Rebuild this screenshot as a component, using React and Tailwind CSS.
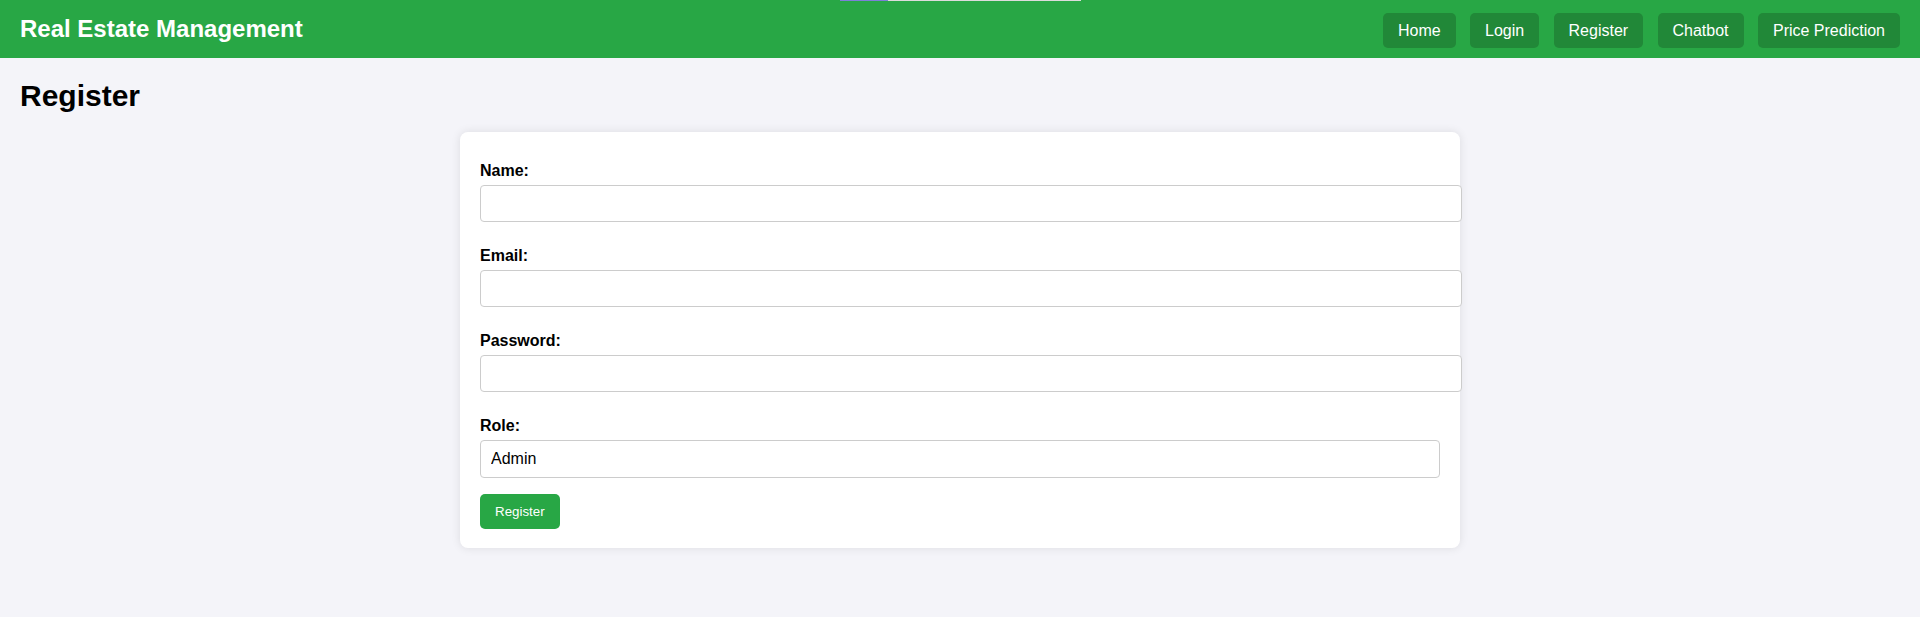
import { useState } from "react";

const fields = [
  { label: "Name:", type: "text" },
  { label: "Email:", type: "email" },
  { label: "Password:", type: "password" },
];

const links = ["Home", "Login", "Register", "Chatbot", "Price Prediction"];

export default function App() {
  const [role, setRole] = useState("admin");

  return (
    <div className="relative min-h-[617px] bg-[#f4f4f9] font-['Liberation_Sans',Arial,sans-serif] text-black">
      {/* thin strip at the very top */}
      <div className="absolute top-0 left-[840px] flex h-px w-[241px]">
        <div className="w-[48px] bg-[#7d80d8]" />
        <div className="flex-1 bg-[#dcdcdc]" />
      </div>

      {/* Header */}
      <header className="flex h-[58px] items-center justify-between bg-[#28a745] px-5 text-white">
        <h1 className="text-[24px] font-bold leading-[28px]">Real Estate Management</h1>
        <nav className="flex items-center gap-[14.4px] pt-[3px]">
          {links.map((l) => (
            <a
              key={l}
              href="#"
              className="flex h-[35px] items-center rounded-[5px] bg-[#218838] px-[15px] text-[16px] leading-[18px] text-white"
            >
              {l}
            </a>
          ))}
        </nav>
      </header>

      {/* Main */}
      <main className="px-5 pt-[21px] pb-10">
        <h2 className="text-[30px] font-bold leading-[34px]">Register</h2>

        <div className="mx-auto mt-[19px] w-full max-w-[1000px] rounded-[8px] bg-white px-5 pt-[29.5px] pb-[19px] shadow-[0_0_10px_rgba(0,0,0,0.1)]">
          <form onSubmit={(e) => e.preventDefault()}>
            {fields.map((f) => (
              <div key={f.label} className="mb-[25px]">
                <label className="mb-[5.5px] block text-[16px] font-bold leading-[18px]">{f.label}</label>
                <input
                  type={f.type}
                  className="block h-[36.6px] w-[calc(100%+22px)] rounded-[4px] border border-[#ccc] bg-white px-[10px] text-[13.33px]"
                />
              </div>
            ))}

            <div>
              <label className="mb-[5.5px] block text-[16px] font-bold leading-[18px]">Role:</label>
              <select
                value={role}
                onChange={(e) => setRole(e.target.value)}
                className="block h-[37.4px] w-full appearance-none rounded-[4px] border border-[#ccc] bg-white px-[10px] text-[16px] leading-[18px]"
              >
                <option value="admin">Admin</option>
                <option value="agent">Agent</option>
                <option value="user">User</option>
              </select>
            </div>

            <button
              type="submit"
              className="mt-4 flex h-[35px] items-center rounded-[5px] bg-[#28a745] px-[15px] text-[13.33px] leading-[15px] text-white"
            >
              Register
            </button>
          </form>
        </div>
      </main>
    </div>
  );
}
